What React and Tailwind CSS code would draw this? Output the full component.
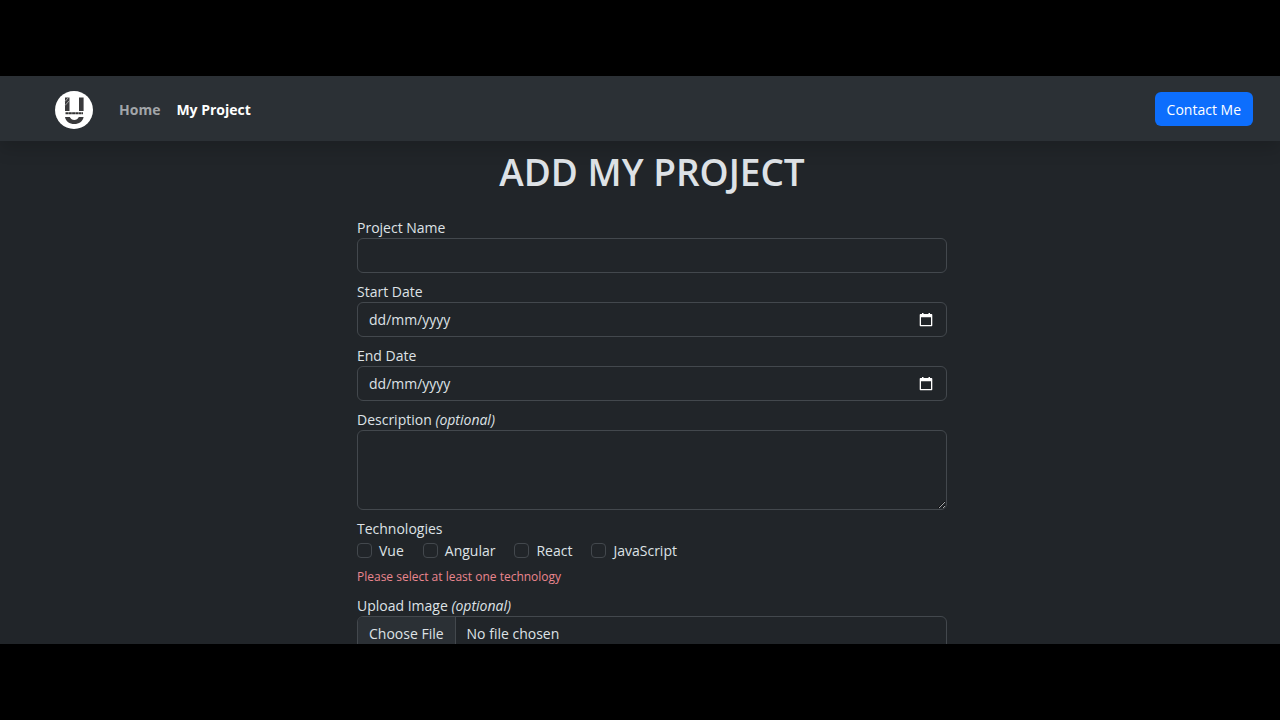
import React, { useState } from "react";

const technologies = ["Vue", "Angular", "React", "JavaScript"];

const fieldStyle =
  "block w-full rounded-md border border-[#43484d] bg-[#212529] text-[#dee2e6] focus:outline-none focus:border-[#86b7fe]";

function Logo() {
  return (
    <svg className="w-[38px] h-[38px]" viewBox="0 0 38 38" aria-hidden="true">
      <circle cx="19" cy="19" r="19" fill="#fff" />
      <path d="M10 6.500h4.500v13.500h-4.500zM24 6.500h4.600v13.500H24z" fill="#3a3a3c" />
      <path d="M10 10.500l3.500-4M10 14.500l4.500-5" stroke="#bbb" strokeWidth="0.8" />
      <path d="M10.500 22.300h17.500" stroke="#333" strokeWidth="2" strokeDasharray="3 0.300" />
      <path
        d="M10 26h4.800c.9 2 2.400 2.900 4.500 2.900s3.600-.9 4.500-2.900h4.800c-.9 4.700-4.500 7-9.300 7s-8.400-2.300-9.300-7z"
        fill="#3a3a3c"
      />
    </svg>
  );
}

function Navbar() {
  return (
    <nav className="relative flex items-center justify-between h-[65px] shrink-0 pl-[55px] pr-[27px] bg-[#2b3035] leading-6 shadow-[0_8px_16px_rgba(0,0,0,0.15)]">
      <div className="flex items-center pt-0.5">
        <a href="#home" aria-label="Homepage" className="mr-[26px]">
          <Logo />
        </a>
        <a href="#home" className="mr-4 font-bold text-[#a2a5a9]">
          Home
        </a>
        <a href="#project" className="font-bold text-white">
          My Project
        </a>
      </div>
      <button
        type="button"
        className="h-[34px] px-3 pt-0.5 rounded-md bg-[#0d6efd] text-white"
      >
        Contact Me
      </button>
    </nav>
  );
}

function DateField({ id, label }) {
  const [value, setValue] = useState("");

  return (
    <div className="mb-2">
      <label htmlFor={id} className="block">
        {label}
      </label>
      <div className="flex items-center h-[35px] rounded-md border border-[#43484d] pl-[11px] pr-[13px]">
        <input
          id={id}
          type="text"
          value={value}
          placeholder="dd/mm/yyyy"
          className="grow min-w-0 bg-transparent placeholder:text-[#dee2e6] focus:outline-none"
          onChange={(e) => setValue(e.target.value)}
        />
        <button type="button" aria-label={`Pick ${label}`}>
          <svg className="block w-[14px] h-[14px]" viewBox="0 0 14 14" fill="#fff">
            <path d="M3 0h1.500v1h5V0H11v1h1.300c.6 0 1 .4 1 1v10.300c0 .6-.4 1-1 1H1.700c-.6 0-1-.4-1-1V2c0-.6.400-1 1-1H3zM2 4.300v7.700h10V4.300z" />
          </svg>
        </button>
      </div>
    </div>
  );
}

function ProjectForm() {
  const [checked, setChecked] = useState([]);

  const toggle = (name) => {
    setChecked(
      checked.includes(name)
        ? checked.filter((item) => item !== name)
        : [...checked, name]
    );
  };

  return (
    <form className="w-full max-w-[590px]">
      <div className="mb-2">
        <label htmlFor="name" className="block">
          Project Name
        </label>
        <input id="name" type="text" className={`${fieldStyle} h-[35px] px-[11px]`} />
      </div>
      <DateField id="start-date" label="Start Date" />
      <DateField id="end-date" label="End Date" />
      <div className="mb-2">
        <label htmlFor="description" className="block">
          Description <i>(optional)</i>
        </label>
        <textarea
          id="description"
          className={`${fieldStyle} h-20 px-[11px] py-1.5 resize-y`}
        />
      </div>
      <fieldset className="mb-2">
        <legend>Technologies</legend>
        <div className="flex items-center h-[23px] gap-[19px]">
          {technologies.map((name) => (
            <label key={name} className="flex items-center gap-[7px]">
              <input
                type="checkbox"
                checked={checked.includes(name)}
                className="appearance-none w-[15px] h-[15px] rounded border border-[#43484d] checked:bg-[#0d6efd]"
                onChange={() => toggle(name)}
              />
              {name}
            </label>
          ))}
        </div>
        {checked.length === 0 && (
          <p className="mt-1 text-xs leading-[21px] text-[#ea868f]">
            Please select at least one technology
          </p>
        )}
      </fieldset>
      <div className="mb-2">
        <label htmlFor="image" className="block">
          Upload Image <i>(optional)</i>
        </label>
        <input
          id="image"
          type="file"
          className={`${fieldStyle} h-[35px] overflow-hidden file:h-[33px] file:px-[11px] file:mr-[11px] file:border-r file:border-[#43484d] file:bg-[#2b3035]`}
        />
      </div>
    </form>
  );
}

function App() {
  return (
    <div className="flex flex-col h-screen py-[76px] bg-black font-['Open_Sans','Noto_Sans',sans-serif] text-sm leading-[21px] text-[#dee2e6]">
      <div className="flex flex-col grow min-h-0 overflow-hidden bg-[#212529]">
        <Navbar />
        <main className="flex flex-col items-center pl-6 pt-2">
          <h1 className="mb-[22px] text-[37px] leading-[46px] font-semibold">
            ADD MY PROJECT
          </h1>
          <ProjectForm />
        </main>
      </div>
    </div>
  );
}

export default App;
